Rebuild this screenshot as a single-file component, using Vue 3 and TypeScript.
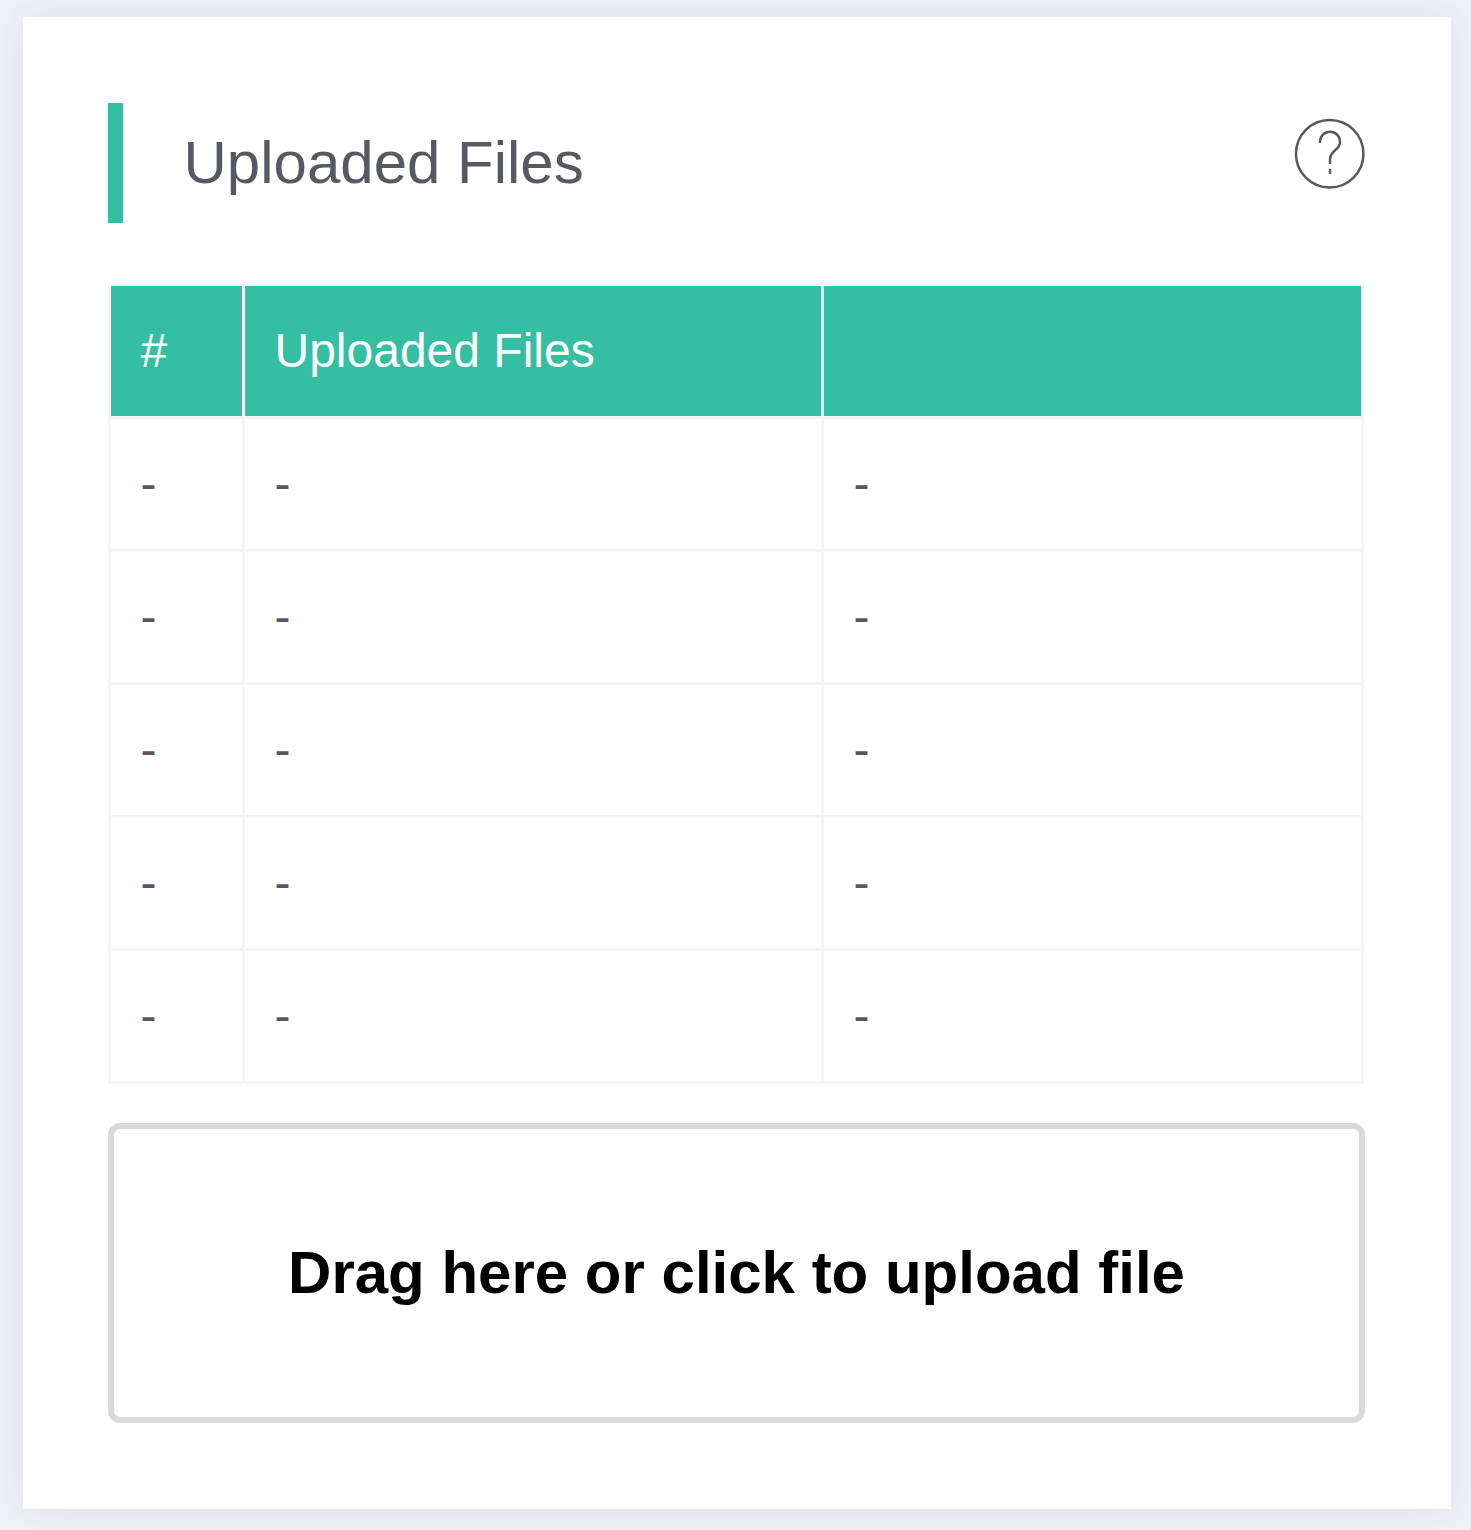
<script setup lang="ts">
interface FileRow {
  index: string
  name: string
  action: string
}

const rows: FileRow[] = Array.from({ length: 5 }, () => ({ index: '-', name: '-', action: '-' }))
</script>

<template>
  <main class="page">
    <section class="card">
      <header class="head">
        <h3 class="title">Uploaded Files</h3>
        <svg class="help" viewBox="0 0 72 72" fill="none" stroke="#575962" stroke-width="2.5">
          <circle cx="36.7" cy="35.7" r="33.75" />
          <path d="M27 25v-1.300a10 10 0 0 1 20 0c0 3.600-1.800 6-4.600 8.300-3.600 2.900-5.400 5.200-5.400 9.500V46M37 50.700V56" />
        </svg>
      </header>

      <table class="files">
        <colgroup>
          <col class="col-index" />
          <col class="col-name" />
          <col />
        </colgroup>
        <thead>
          <tr>
            <th>#</th>
            <th>Uploaded Files</th>
            <th></th>
          </tr>
        </thead>
        <tbody>
          <tr v-for="(row, i) in rows" :key="i">
            <td>{{ row.index }}</td>
            <td>{{ row.name }}</td>
            <td>{{ row.action }}</td>
          </tr>
        </tbody>
      </table>

      <div class="dropzone">Drag here or click to upload file</div>
    </section>
  </main>
</template>

<style>
body {
  margin: 0;
  background: #f2f3f8;
}
</style>

<style scoped>
.page {
  box-sizing: border-box;
  height: 1530px;
  padding: 17px 20px 21px 23px;
  overflow: hidden;
  background: #f2f3f8;
  font-family: "Liberation Sans", Arial, sans-serif;
  color: #575962;
}

.card {
  box-sizing: border-box;
  height: 1492px;
  padding: 86px 86px 86px 85px;
  background: #fff;
  box-shadow: 0 0 45px 6px rgba(69, 65, 78, 0.09);
}

.head {
  display: flex;
  justify-content: space-between;
  height: 120px;
  margin-bottom: 60px;
  border-left: 15px solid #34bfa3;
}

.title {
  margin: 0 0 0 60.5px;
  font-size: 60px;
  font-weight: 400;
  line-height: 120px;
}

.help {
  width: 72px;
  height: 72px;
  margin-top: 15px;
}

.files {
  width: 1256px;
  border-spacing: 3px;
  table-layout: fixed;
  background: #f4f5f8;
  font-size: 48px;
  line-height: 72px;
}

.col-index {
  width: 131px;
}

.col-name {
  width: 576px;
}

.files th,
.files td {
  box-sizing: border-box;
  height: 130px;
  padding: 29px 30px 29px 29.5px;
  text-align: left;
  font-weight: 400;
  background: #fff;
}

.files th {
  color: #fff;
  background: #34bfa3;
}

.dropzone {
  box-sizing: border-box;
  display: flex;
  align-items: center;
  justify-content: center;
  height: 300px;
  margin-top: 39px;
  border: 6px solid #d9d9d9;
  border-radius: 12px;
  color: #000;
  font-size: 60px;
  font-weight: 700;
  line-height: 72px;
}
</style>
